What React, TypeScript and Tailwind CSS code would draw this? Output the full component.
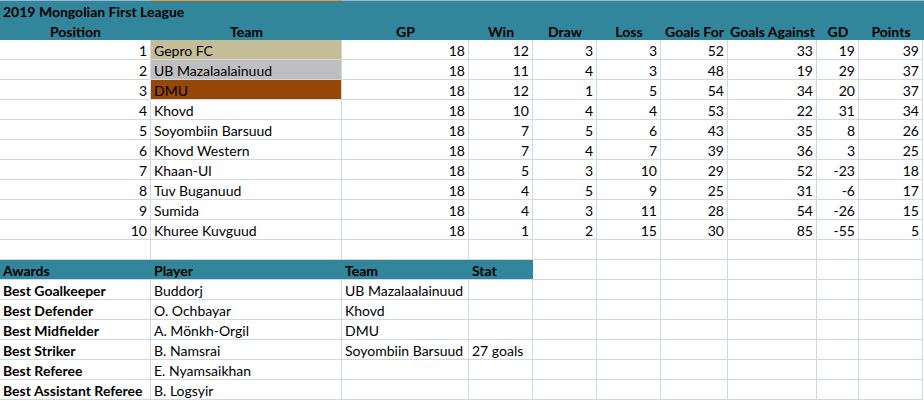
import React from 'react';

type Standing = [number, string, number, number, number, number, number, number, number, number];

const standings: Standing[] = [
  [1, 'Gepro FC', 18, 12, 3, 3, 52, 33, 19, 39],
  [2, 'UB Mazalaalainuud', 18, 11, 4, 3, 48, 19, 29, 37],
  [3, 'DMU', 18, 12, 1, 5, 54, 34, 20, 37],
  [4, 'Khovd', 18, 10, 4, 4, 53, 22, 31, 34],
  [5, 'Soyombiin Barsuud', 18, 7, 5, 6, 43, 35, 8, 26],
  [6, 'Khovd Western', 18, 7, 4, 7, 39, 36, 3, 25],
  [7, 'Khaan-Ul', 18, 5, 3, 10, 29, 52, -23, 18],
  [8, 'Tuv Buganuud', 18, 4, 5, 9, 25, 31, -6, 17],
  [9, 'Sumida', 18, 4, 3, 11, 28, 54, -26, 15],
  [10, 'Khuree Kuvguud', 18, 1, 2, 15, 30, 85, -55, 5],
];

const awards = [
  ['Best Goalkeeper', 'Buddorj', 'UB Mazalaalainuud', ''],
  ['Best Defender', 'O. Ochbayar', 'Khovd', ''],
  ['Best Midfielder', 'A. Mönkh-Orgil', 'DMU', ''],
  ['Best Striker', 'B. Namsrai', 'Soyombiin Barsuud', '27 goals'],
  ['Best Referee', 'E. Nyamsaikhan', '', ''],
  ['Best Assistant Referee', 'B. Logsyir', '', ''],
];

const highlight: Record<number, string> = {
  1: 'bg-[#c4bd97] border-[#c4bd97]',
  2: 'bg-[#bfbfbf] border-[#bfbfbf]',
  3: 'bg-[#974806] border-[#974806]',
};

const cols = 'grid grid-cols-[151px_191px_127px_64px_64px_64px_67px_89px_42px_64px_1px]';
const cell = 'h-[20px] border-r border-b border-[#d0d7e5] px-[3px] pt-[2px] leading-[17px] whitespace-nowrap';

const Cell: React.FC<{ children?: React.ReactNode; right?: boolean; bold?: boolean; extra?: string }> = ({
  children,
  right,
  bold,
  extra,
}) => (
  <div className={`${cell} ${right ? 'text-right' : 'text-left'} ${bold ? 'font-bold' : ''} ${extra ?? ''}`}>
    {children}
  </div>
);

const EmptyCells: React.FC<{ count: number }> = ({ count }) => (
  <>
    {Array.from({ length: count }).map((_, i) => (
      <Cell key={i} />
    ))}
  </>
);

export default function App() {
  const headers = ['Position', 'Team', 'GP', 'Win', 'Draw', 'Loss', 'Goals For', 'Goals Against', 'GD', 'Points'];

  return (
    <div className="w-[924px] h-[401px] overflow-hidden bg-white text-black text-[14px] font-['Lato','Liberation_Sans',sans-serif]">
      {/* top edge */}
      <div className="flex h-px">
        <div className="w-[151px] bg-[#9eb6ce]" />
        <div className="w-[191px] bg-[#f29436]" />
        <div className="flex-1 bg-[#9eb6ce]" />
      </div>

      {/* title + header */}
      <div className="bg-[#31869b] font-bold">
        <div className="h-[19px] px-[3px] pt-[3px] leading-[16px]">2019 Mongolian First League</div>
        <div className={cols}>
          {headers.map((h) => (
            <div key={h} className="h-[20px] pt-[4px] leading-[16px] text-center whitespace-nowrap">
              {h}
            </div>
          ))}
          <div />
        </div>
      </div>

      {/* standings */}
      {standings.map((row) => (
        <div key={row[0]} className={cols}>
          <Cell right>{row[0]}</Cell>
          <Cell extra={highlight[row[0]] ?? ''}>{row[1]}</Cell>
          {row.slice(2).map((v, i) => (
            <Cell key={i} right>
              {v}
            </Cell>
          ))}
          <div />
        </div>
      ))}

      {/* spacer row */}
      <div className={cols}>
        <EmptyCells count={10} />
        <div />
      </div>

      {/* awards header */}
      <div className={cols}>
        <div className="col-span-4 h-[20px] bg-[#31869b] border-b border-[#d0d7e5] font-bold grid grid-cols-[151px_191px_127px_64px] pt-[2px] leading-[17px]">
          <div className="px-[3px]">Awards</div>
          <div className="px-[3px]">Player</div>
          <div className="px-[3px]">Team</div>
          <div className="px-[3px]">Stat</div>
        </div>
        <EmptyCells count={6} />
        <div />
      </div>

      {/* awards */}
      {awards.map((a) => (
        <div key={a[0]} className={cols}>
          <Cell bold>{a[0]}</Cell>
          <Cell>{a[1]}</Cell>
          <Cell>{a[2]}</Cell>
          <Cell>{a[3]}</Cell>
          <EmptyCells count={6} />
          <div />
        </div>
      ))}
    </div>
  );
}
